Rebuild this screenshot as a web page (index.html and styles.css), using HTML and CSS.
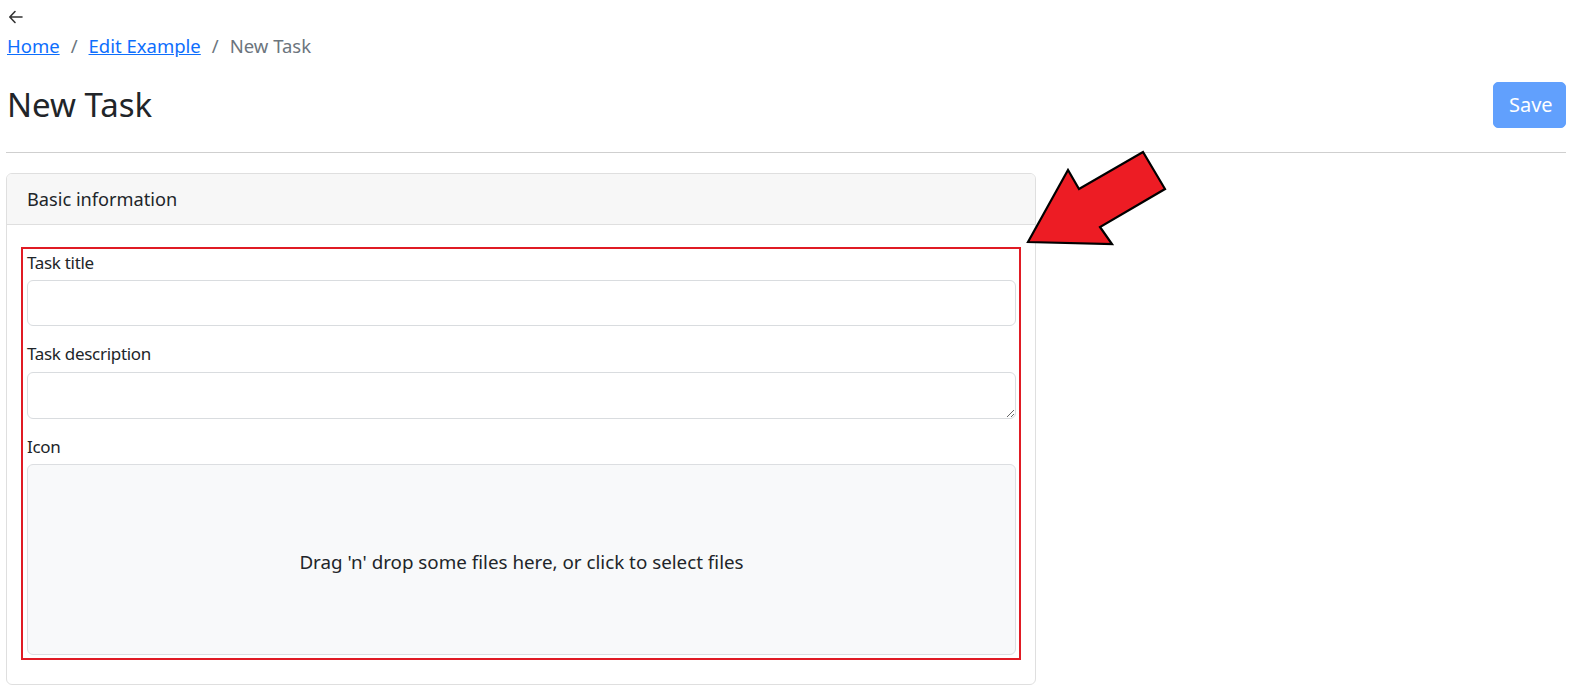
FILE: index.html
```html
<!DOCTYPE html>
<html lang="en">
<head>
<meta charset="utf-8">
<title>New Task</title>
<link rel="stylesheet" href="styles.css">
</head>
<body>
<div class="page">
  <div class="back">
    <svg width="16" height="16" viewBox="0 0 16 16"><path d="M14 8H2M7 2.5L1.8 8L7 13.5" fill="none" stroke="#333" stroke-width="1.6" stroke-linecap="round" stroke-linejoin="round"/></svg>
  </div>
  <nav class="breadcrumb">
    <a href="#">Home</a><span class="sep">/</span><a href="#">Edit Example</a><span class="sep">/</span><span class="current">New Task</span>
  </nav>
  <div class="header-row">
    <h1 class="title">New Task</h1>
    <button class="btn-save" disabled>Save</button>
  </div>
  <hr class="rule">
  <div class="card">
    <div class="card-header">Basic information</div>
    <div class="card-body">
      <div class="highlight">
        <div class="field">
          <label class="label">Task title</label>
          <input class="control" type="text">
        </div>
        <div class="field">
          <label class="label">Task description</label>
          <textarea class="control textarea" rows="1"></textarea>
        </div>
        <div class="field last">
          <label class="label">Icon</label>
          <div class="dropzone">Drag 'n' drop some files here, or click to select files</div>
        </div>
      </div>
    </div>
  </div>
</div>
<svg class="callout" width="1570" height="687" viewBox="0 0 1570 687">
  <polygon points="1028,242 1068,170 1079,189 1143,152 1165,189 1100,227 1112,244" fill="#ed1c24" stroke="#000" stroke-width="2.2" stroke-linejoin="miter"/>
</svg>
</body>
</html>
```
FILE: styles.css
```css
html, body {
  margin: 0;
  padding: 0;
  background: #fff;
}
body {
  font-family: "Noto Sans", "Open Sans", sans-serif;
  font-size: 18px;
  color: #212529;
}
.page {
  padding: 0 4px 0 6px;
}
.back {
  height: 32px;
  padding-top: 9px;
  padding-left: 2px;
  box-sizing: border-box;
}
.back svg {
  display: block;
}
.breadcrumb {
  line-height: 27px;
  height: 27px;
  padding-left: 1px;
  font-size: 18.5px;
}
.breadcrumb a {
  color: #0d6efd;
  text-decoration: underline;
}
.breadcrumb .sep {
  color: #6c757d;
  padding: 0 11px;
}
.breadcrumb .current {
  color: #6c757d;
}
.header-row {
  display: flex;
  justify-content: space-between;
  align-items: center;
  margin-top: 23px;
  height: 46px;
  padding-left: 1px;
}
.title {
  margin: 0;
  font-size: 33px;
  font-weight: 400;
  line-height: 1.2;
}
.btn-save {
  font-family: inherit;
  font-size: 20px;
  line-height: 30px;
  height: 46px;
  padding: 0 15px;
  width: 73px;
  margin-right: 0;
  background: #0d6efd;
  border: 1px solid #0d6efd;
  color: #fff;
  border-radius: 5px;
  opacity: 0.65;
}
.rule {
  margin: 24px 0 20px 0;
  border: 0;
  border-top: 1px solid #cfcfcf;
}
.card {
  width: 1030px;
  box-sizing: border-box;
  border: 1px solid #dfdfdf;
  border-radius: 6px;
}
.card-header {
  height: 51px;
  box-sizing: border-box;
  padding: 0 20px;
  line-height: 50px;
  background: #f7f7f7;
  border-bottom: 1px solid #dfdfdf;
  border-radius: 5px 5px 0 0;
  font-size: 18.2px;
}
.card-body {
  padding: 22px 14px 24px 14px;
}
.highlight {
  border: 2px solid #e01b24;
  padding: 0 3px 3px 4px;
}
.field {
  margin-bottom: 14px;
}
.field.last {
  margin-bottom: 0;
}
.label {
  display: block;
  line-height: 27px;
  font-size: 17px;
  margin-bottom: 4px;
  letter-spacing: -0.3px;
}
.control {
  display: block;
  width: 100%;
  box-sizing: border-box;
  height: 46px;
  border: 1px solid #d9dcdf;
  border-radius: 6px;
  font-family: inherit;
  font-size: 18px;
  padding: 8px 12px;
  margin: 0;
  background: #fff;
}
.textarea {
  resize: vertical;
  margin-top: 5px;
  height: 47px;
}
.dropzone {
  height: 191px;
  box-sizing: border-box;
  border: 1px solid #dcdee1;
  border-radius: 6px;
  background: #f8f9fa;
  display: flex;
  align-items: center;
  justify-content: center;
  font-size: 18.8px;
  padding-top: 4px;
}
.callout {
  position: absolute;
  left: 0;
  top: 0;
  pointer-events: none;
}
```
